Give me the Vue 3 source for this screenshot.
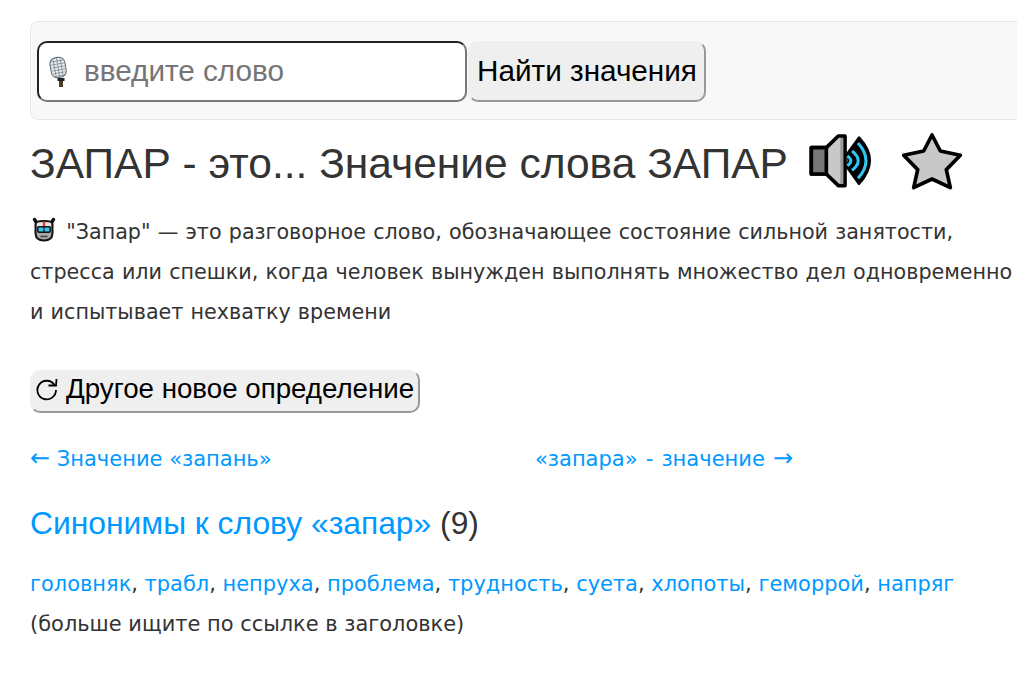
<script setup>
const synonyms = ['головняк', 'трабл', 'непруха', 'проблема', 'трудность', 'суета', 'хлопоты', 'геморрой', 'напряг']
</script>

<template>
  <div class="page">
    <form class="search" @submit.prevent>
      <div class="field">
        <svg class="mic" viewBox="0 0 18 32" width="18" height="32">
          <g transform="rotate(-10 9 11)">
            <rect x="1.500" y="1.500" width="15" height="20" rx="6" fill="#eceff1" stroke="#5f6b76" stroke-width="1.100" />
            <path d="M3 5h12M2.500 8h13M2.500 11h13M2.500 14h13M3 17h12M4 20h10M5.500 3v17M9 2v19M12.500 3v17" stroke="#7f8b96" stroke-width=".8" fill="none" />
          </g>
          <rect x="8.500" y="22" width="7" height="3" fill="#222" />
          <rect x="10" y="25" width="4" height="6" fill="#4a3b22" />
        </svg>
        <input class="input" type="text" placeholder="введите слово" />
      </div>
      <button class="btn btn-find" type="submit">Найти значения</button>
    </form>

    <div class="title-row">
      <h1 class="title">ЗАПАР - это... Значение слова ЗАПАР</h1>
      <svg class="speaker" viewBox="55 35 195 170" width="65" height="56.700">
        <path d="M65 82h45l36-35h20v149h-20l-36-35H65z" fill="#c8c8c8" stroke="#000" stroke-width="11" stroke-linejoin="round" />
        <path d="M65 82h45v79H65z" fill="#777" stroke="#000" stroke-width="11" stroke-linejoin="round" />
        <rect x="152" y="53" width="9" height="137" fill="#999" />
        <path d="M172 102L208 52Q272 120 208 190L172 140Q182 120 172 102z" fill="#000" stroke="#000" stroke-width="8" stroke-linejoin="round" />
        <path d="M173 107Q194 121 173 136" fill="none" stroke="#2fc8f5" stroke-width="9" />
        <path d="M187 92Q224 121 187 150" fill="none" stroke="#2fc8f5" stroke-width="9" />
        <path d="M205 68Q253 121 205 174" fill="none" stroke="#2fc8f5" stroke-width="9" />
      </svg>
      <svg class="star" viewBox="335 35 185 175" width="61.700" height="58.300">
        <path d="M425 44L450 92L510 105L468 148L480 202L425 176L370 202L382 148L340 105L400 92z" fill="#c8c8c8" stroke="#000" stroke-width="11" stroke-linejoin="round" />
      </svg>
    </div>

    <p class="definition">
      <svg class="robot" viewBox="0 0 24 25" width="24" height="25">
        <path d="M2.500 2.500l3 4.500M21.500 2.500l-3 4.500" stroke="#111" stroke-width="3.500" stroke-linecap="round" />
        <path d="M3.500 7c0-2 3-3 8.500-3s8.500 1 8.500 3v9c0 5-3.500 7.500-8.500 7.500S3.500 21 3.500 16z" fill="#a8a8a8" stroke="#111" stroke-width="2" />
        <path d="M5 6c2-1 12-1 14 0v3H5z" fill="#e4e4e4" />
        <path d="M10.800 4.500h2.500V9h-2.500z" fill="#e0452c" />
        <rect x="5" y="9" width="14" height="7" rx="2" fill="#161616" />
        <rect x="6.500" y="10.500" width="5" height="4" rx="1" fill="#35c3ee" />
        <rect x="12.500" y="10.500" width="5" height="4" rx="1" fill="#35c3ee" />
        <path d="M8.500 19.500h7" stroke="#444" stroke-width="1.500" />
      </svg>
      "Запар" — это разговорное слово, обозначающее состояние сильной занятости, стресса или спешки, когда человек вынужден выполнять множество дел одновременно и испытывает нехватку времени
    </p>

    <button class="btn btn-other" type="button">
      <svg class="reload" viewBox="0 0 24 24" width="24" height="24">
        <path d="M19.500 8A9.300 9.300 0 1 0 21 13" fill="none" stroke="#000" stroke-width="1.800" />
        <path d="M13.500 8.500L21 8.500L21.500 2" fill="none" stroke="#000" stroke-width="1.800" />
      </svg>
      <span>Другое новое определение</span>
    </button>

    <nav class="pager">
      <a class="link pager-prev" href="#"><span class="arrow">←</span> Значение «запань»</a>
      <a class="link pager-next" href="#">«запара» - значение <span class="arrow">→</span></a>
    </nav>

    <h2 class="syn-title"><a class="link-h" href="#">Синонимы к слову «запар»</a> (9)</h2>

    <p class="syn-list">
      <template v-for="(s, i) in synonyms" :key="s"><a class="link" href="#">{{ s }}</a><span v-if="i &lt; synonyms.length - 1">, </span></template>
      <br />(больше ищите по ссылке в заголовке)
    </p>
  </div>
</template>

<style scoped>
.page {
  width: 1017px;
  height: 674px;
  overflow: hidden;
  box-sizing: border-box;
  padding: 21px 0 0 30px;
  font-family: "DejaVu Sans", sans-serif;
  font-size: 21px;
  color: #333;
  background: #fff;
}
.search {
  display: flex;
  align-items: stretch;
  width: 1040px;
  height: 99px;
  box-sizing: border-box;
  padding: 19px 0 0 6px;
  background: #f8f8f8;
  border: 1px solid #e7e7e7;
  border-radius: 8px;
}
.field {
  position: relative;
  width: 430px;
  height: 61px;
}
.mic {
  position: absolute;
  left: 12px;
  top: 15px;
}
.input {
  width: 100%;
  height: 100%;
  box-sizing: border-box;
  padding: 0 10px 2px 45px;
  font-family: "Liberation Sans", Arial, sans-serif;
  font-size: 29.700px;
  background: #fff;
  border: 2px solid;
  border-color: #222 #777 #777 #222;
  border-radius: 10px;
  outline: none;
}
.input::placeholder {
  color: #757575;
  opacity: 1;
}
.btn {
  box-sizing: border-box;
  font-family: "Liberation Sans", Arial, sans-serif;
  color: #000;
  background: #efefef;
  border: 2px solid;
  border-color: #efefef #999 #999 #efefef;
  border-radius: 10px;
  padding: 0;
  white-space: nowrap;
}
.btn-find {
  width: 238px;
  height: 61px;
  margin-left: 1px;
  padding-bottom: 2px;
  font-size: 29.700px;
}
.title-row {
  display: flex;
  align-items: center;
  height: 88px;
}
.title {
  margin: 0;
  font-family: "Liberation Sans", Arial, sans-serif;
  font-size: 42.500px;
  font-weight: 400;
  color: #333;
  white-space: nowrap;
}
.speaker {
  margin: 0 0 8px 20px;
}
.star {
  margin: 0 0 6px 29px;
}
.definition {
  margin: 0;
  padding-top: 4px;
  width: 987px;
  font-size: 20.700px;
  word-spacing: 0.600px;
  line-height: 40px;
  color: #333;
}
.robot {
  vertical-align: -3px;
  margin: 0 3px 0 2px;
}
.btn-other {
  display: flex;
  align-items: center;
  gap: 7px;
  width: 390px;
  height: 43px;
  margin-top: 38px;
  padding: 0 0 5px 3px;
  font-size: 27.700px;
}
.reload {
  flex: none;
}
.pager {
  display: flex;
  margin-top: 26px;
  line-height: 40px;
}
.pager-prev {
  width: 505px;
}
.pager-next {
  word-spacing: 1.500px;
}
.arrow {
  font-size: 24px;
  line-height: 1;
}
.link {
  color: #0099ff;
  text-decoration: none;
}
.link-h {
  color: #0099ff;
  text-decoration: none;
}
.syn-title {
  margin: 24px 0 0;
  font-family: "Liberation Sans", Arial, sans-serif;
  font-size: 31.800px;
  font-weight: 400;
  line-height: 40px;
  color: #333;
}
.syn-list {
  margin: 21px 0 0;
  font-size: 20.950px;
  line-height: 40px;
}
</style>
